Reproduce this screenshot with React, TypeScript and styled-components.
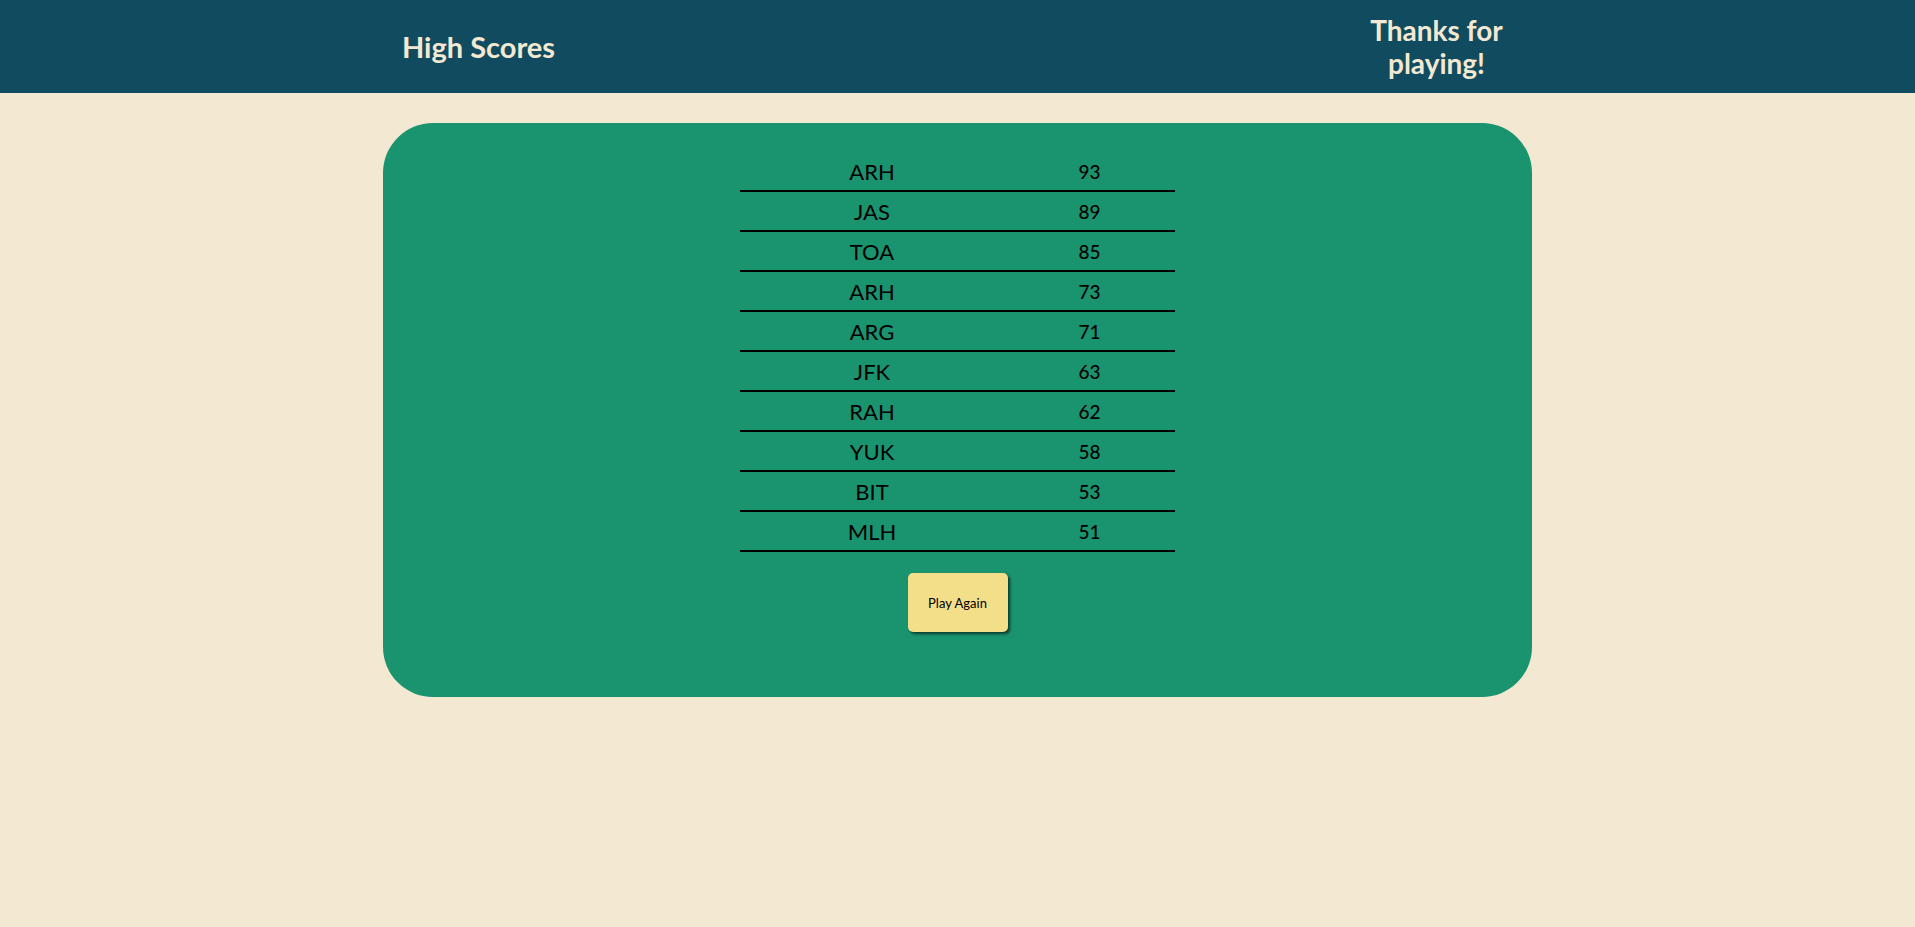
import styled, { createGlobalStyle } from "styled-components";

const scores = [
    { name: "ARH", score: 93 },
    { name: "JAS", score: 89 },
    { name: "TOA", score: 85 },
    { name: "ARH", score: 73 },
    { name: "ARG", score: 71 },
    { name: "JFK", score: 63 },
    { name: "RAH", score: 62 },
    { name: "YUK", score: 58 },
    { name: "BIT", score: 53 },
    { name: "MLH", score: 51 },
];

export default function App() {
    return (
        <>
            <GlobalStyle />
            <Header>
                <HeaderItem size={29}>High Scores</HeaderItem>
                <HeaderItem size={28}>Thanks for playing!</HeaderItem>
            </Header>

            <Card>
                <Table>
                    {scores.map((row, i) => (
                        <Row key={i}>
                            <Name>{row.name}</Name>
                            <Score>{row.score}</Score>
                        </Row>
                    ))}
                </Table>

                <Button>Play Again</Button>
            </Card>
        </>
    );
}

const GlobalStyle = createGlobalStyle`
    body {
        margin: 0;
        background: #F3E9D2;
        font-family: "Lato", "DejaVu Sans", sans-serif;
    }
`;

const Header = styled.header`
    display: flex;
    justify-content: space-between;
    align-items: center;
    height: 93px;
    padding: 0 20%;
    background: #114B5F;
`;

const HeaderItem = styled.h1<{ size: number }>`
    width: 50%;
    max-width: 191px;
    margin: 0;
    text-align: center;
    font-size: ${(p) => p.size}px;
    font-weight: 700;
    line-height: 1.15;
    color: #F3E9D2;
`;

const Card = styled.main`
    display: flex;
    flex-direction: column;
    align-items: center;
    width: 60%;
    margin: 30px auto 0;
    padding: 29px 0 65px;
    box-sizing: border-box;
    background: #1A936F;
    border-radius: 50px;
`;

const Table = styled.div`
    display: flex;
    flex-direction: column;
    width: 435px;
`;

const Row = styled.div`
    display: grid;
    grid-template-columns: 264px 171px;
    align-items: center;
    height: 40px;
    border-bottom: 2px solid #000;
    box-sizing: border-box;
    color: #000;
`;

const Name = styled.span`
    text-align: center;
    font-size: 22px;
`;

const Score = styled.span`
    text-align: center;
    font-size: 19px;
    font-weight: 500;
`;

const Button = styled.button`
    width: 100px;
    height: 59px;
    margin-top: 21px;
    border: 0;
    border-radius: 5px;
    background: #F3DE8A;
    box-shadow: 2px 2px 3px #0b3a2c;
    font-family: "Lato", "DejaVu Sans", sans-serif;
    font-size: 13px;
    color: #000;
    cursor: pointer;
`;
